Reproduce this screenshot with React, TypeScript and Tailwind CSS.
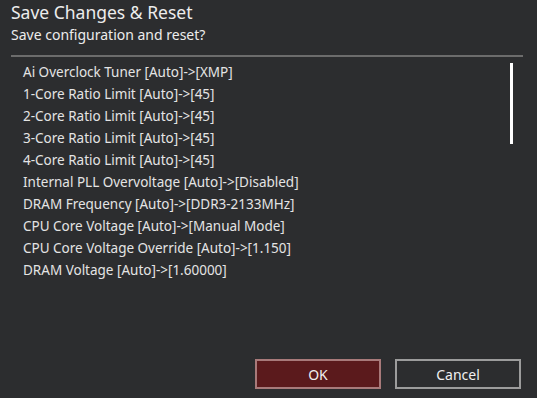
const items = [
  "Ai Overclock Tuner [Auto]->[XMP]",
  "1-Core Ratio Limit [Auto]->[45]",
  "2-Core Ratio Limit [Auto]->[45]",
  "3-Core Ratio Limit [Auto]->[45]",
  "4-Core Ratio Limit [Auto]->[45]",
  "Internal PLL Overvoltage [Auto]->[Disabled]",
  "DRAM Frequency [Auto]->[DDR3-2133MHz]",
  "CPU Core Voltage [Auto]->[Manual Mode]",
  "CPU Core Voltage Override [Auto]->[1.150]",
  "DRAM Voltage [Auto]->[1.60000]",
];

export default function App() {
  return (
    <div className="w-[537px] h-[398px] bg-[#2c2d2f] text-[#ececec] font-['Noto_Sans','Open_Sans',sans-serif] flex flex-col">
      <div className="pl-[11px]">
        <h1 className="text-[17.5px] leading-[24px]">Save Changes &amp; Reset</h1>
        <p className="mt-px text-[14px] leading-[20px]">Save configuration and reset?</p>
      </div>
      <div className="mt-[10px] ml-[11px] w-[512px] h-[2px] bg-[#6c6c6c]" />
      <div className="flex justify-between pl-[23px] pr-[24px]">
        <ul className="mt-[4px] text-[13.5px] leading-[22px] text-[#e4e4e4]">
          {items.map((item) => (
            <li key={item}>{item}</li>
          ))}
        </ul>
        <div className="mt-[6px] w-[3px] h-[81px] bg-white" />
      </div>
      <div className="mt-auto mb-[9px] pr-[16px] flex justify-end gap-[14px]">
        <button className="w-[126px] h-[30px] bg-[#5b1a1c] border-2 border-[#a87a7a] text-[14px] text-[#f0f0f0]">
          OK
        </button>
        <button className="w-[126px] h-[30px] border-2 border-[#9c9c9c] text-[14px] text-[#f0f0f0]">
          Cancel
        </button>
      </div>
    </div>
  );
}
